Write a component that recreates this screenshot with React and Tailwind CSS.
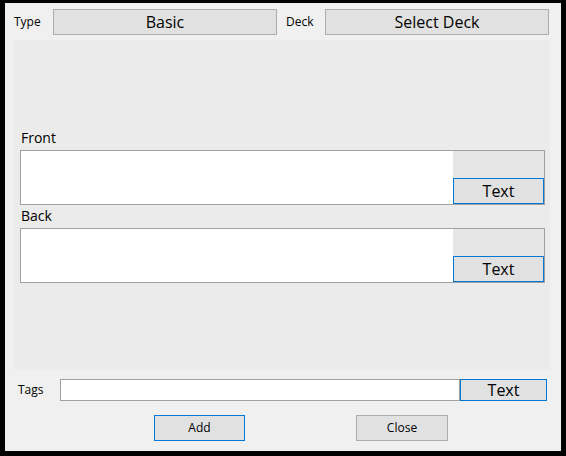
import React from 'react';

const font = { fontFamily: '"Open Sans", "Noto Sans", sans-serif' };

const FieldBox = ({ label }) => {
	return (
		<div>
			<div className="pl-[7px] text-[14px] leading-[18px] text-black">{label}</div>
			<div className="ml-[6px] mt-[3px] flex h-[55px] w-[525px] border border-[#a0a0a0] bg-white">
				<div className="flex-1 bg-white"></div>
				<div className="flex w-[91px] flex-col">
					<div className="flex-1 bg-[#e6e6e6]"></div>
					<button type="button"
					        className="h-[26px] border border-[#0078d7] bg-[#e1e1e1] text-[16px] leading-none text-black">
						Text
					</button>
				</div>
			</div>
		</div>
	);
};

const App = () => {
	return (
		<div className="h-[456px] w-[566px] bg-black pt-[3px] pr-[5px] pb-[5px] pl-[5px]" style={font}>
			<div className="flex h-full w-full flex-col bg-[#f0f0f0]">

				{/* top row */}
				<div className="mt-[6px] flex h-[26px] items-center">
					<div className="w-[48px] pl-[9px] text-[12px] text-black">Type</div>
					<div className="flex h-[26px] w-[224px] items-center justify-center border border-[#adadad] bg-[#e1e1e1] text-[16px] text-black">
						Basic
					</div>
					<div className="w-[48px] pl-[9px] text-[12px] text-black">Deck</div>
					<div className="flex h-[26px] w-[224px] items-center justify-center border border-[#adadad] bg-[#e1e1e1] text-[16px] text-black">
						Select Deck
					</div>
				</div>

				{/* panel */}
				<div className="mt-[5px] ml-[9px] h-[330px] w-[536px] bg-[#ebebeb] pt-[89px]">
					<FieldBox label="Front"/>
					<div className="mt-[2px]">
						<FieldBox label="Back"/>
					</div>
				</div>

				{/* tags */}
				<div className="mt-[9px] flex h-[22px] items-center">
					<div className="w-[55px] pl-[13px] text-[12px] text-black">Tags</div>
					<div className="h-[22px] w-[400px] border border-[#a0a0a0] bg-white"></div>
					<button type="button"
					        className="h-[22px] w-[87px] border border-[#0078d7] bg-[#e1e1e1] text-[16px] leading-none text-black">
						Text
					</button>
				</div>

				{/* buttons */}
				<div className="mt-[14px] flex h-[26px]">
					<button type="button"
					        className="ml-[149px] h-[26px] w-[91px] border border-[#0078d7] bg-[#e1e1e1] text-[12px] text-black">
						Add
					</button>
					<button type="button"
					        className="ml-[111px] h-[26px] w-[92px] border border-[#adadad] bg-[#e1e1e1] text-[12px] text-black">
						Close
					</button>
				</div>

			</div>
		</div>
	);
};

export default App;
